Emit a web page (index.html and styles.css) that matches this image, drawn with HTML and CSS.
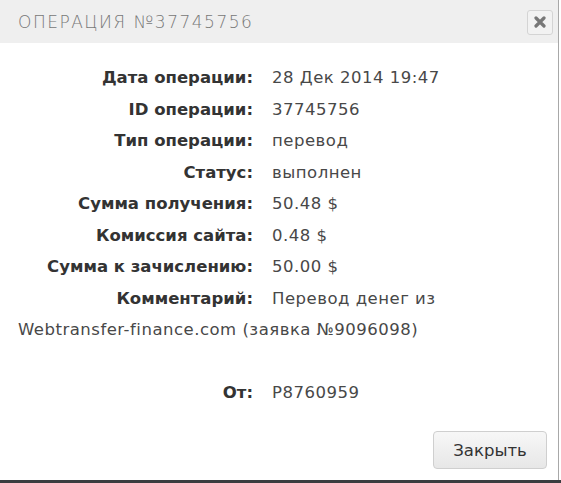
FILE: index.html
```html
<!DOCTYPE html>
<html>
<head>
<meta charset="utf-8">
<link rel="stylesheet" href="styles.css">
</head>
<body>
<div class="dialog">
  <div class="header">
    <div class="title">ОПЕРАЦИЯ №37745756</div>
    <button class="close" aria-label="close"><svg width="12" height="12" viewBox="0 0 12 12"><path d="M2 2 L10 10 M10 2 L2 10" stroke="#777" stroke-width="3.2" stroke-linecap="round"/></svg></button>
  </div>
  <div class="body">
    <div class="row"><span class="label">Дата операции:</span><span class="value">28 Дек 2014 19:47</span></div>
    <div class="row"><span class="label">ID операции:</span><span class="value">37745756</span></div>
    <div class="row"><span class="label">Тип операции:</span><span class="value">перевод</span></div>
    <div class="row"><span class="label">Статус:</span><span class="value">выполнен</span></div>
    <div class="row"><span class="label">Сумма получения:</span><span class="value">50.48 $</span></div>
    <div class="row"><span class="label">Комиссия сайта:</span><span class="value">0.48 $</span></div>
    <div class="row"><span class="label">Сумма к зачислению:</span><span class="value">50.00 $</span></div>
    <div class="row"><span class="label">Комментарий:</span><span class="value">Перевод денег из <span class="nowrap">Webtransfer-finance.com</span> (заявка №9096098)</span></div>
    <div class="row spacer"></div>
    <div class="row"><span class="label">От:</span><span class="value">P8760959</span></div>
  </div>
  <div class="footer">
    <button class="btn">Закрыть</button>
  </div>
</div>
<div class="bottom"></div>
</body>
</html>
```
FILE: styles.css
```css
html, body {
  margin: 0;
  padding: 0;
  background: #fff;
}
body {
  width: 561px;
  height: 483px;
  overflow: hidden;
  font-family: "DejaVu Sans", sans-serif;
}
.dialog {
  width: 558px;
  height: 480px;
  border-right: 1px solid #a8a8a8;
  display: flex;
  flex-direction: column;
}
.header {
  height: 43px;
  background: #efefef;
  display: flex;
  align-items: center;
  justify-content: space-between;
  padding: 0 5px 0 18px;
}
.title {
  font-size: 17px;
  color: #777;
  letter-spacing: 1.5px;
  font-weight: 300;
}
.close {
  width: 26px;
  height: 25px;
  margin-top: 1px;
  border: 1px solid #d4d4d4;
  border-radius: 3px;
  background: #f2f2f2;
  display: flex;
  align-items: center;
  justify-content: center;
  padding: 0;
}
.body {
  padding: 19px 18px 0 18px;
  font-size: 16.5px;
  line-height: 31.5px;
  flex: 1;
}
.row {
  color: #444;
}
.spacer {
  height: 31.5px;
}
.label {
  display: inline-block;
  width: 235px;
  text-align: right;
  color: #333;
  font-weight: 600;
  margin-right: 19px;
}
.value {
  color: #484848;
  letter-spacing: 0.5px;
}
.nowrap {
  white-space: nowrap;
}
.footer {
  display: flex;
  justify-content: flex-end;
  padding: 0 11px 11px 0;
}
.btn {
  width: 114px;
  height: 38px;
  border: 1px solid #cfcfcf;
  border-radius: 4px;
  background: linear-gradient(#f7f7f7, #e7e7e7);
  font-family: "DejaVu Sans", sans-serif;
  font-size: 16.5px;
  color: #333;
  padding: 0;
}
.bottom {
  height: 3px;
  background: #3a3d40;
}
```
